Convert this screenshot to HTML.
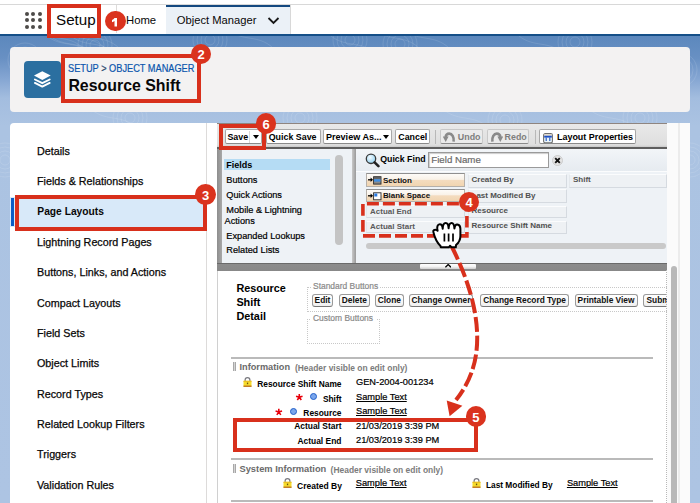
<!DOCTYPE html>
<html><head><meta charset="utf-8"><style>
html,body{margin:0;padding:0;width:700px;height:503px;overflow:hidden;background:#fff}
.a{position:absolute}
.t{position:absolute;white-space:nowrap;line-height:1;font-family:"Liberation Sans",sans-serif}
.badge{position:absolute;border-radius:50%;background:#da331e;color:#fff;font-family:"Liberation Sans",sans-serif;font-weight:700;font-size:13px;text-align:center}
</style></head><body>
<div class="a" style="left:0px;top:0px;width:700px;height:34px;background:#fff"></div>
<div class="a" style="left:0px;top:4px;width:700px;height:1px;background:#d8d8d8"></div>
<div class="a" style="left:24.60px;top:11.50px;width:4px;height:4px;border-radius:50%;background:#4d4b49"></div>
<div class="a" style="left:31.20px;top:11.50px;width:4px;height:4px;border-radius:50%;background:#4d4b49"></div>
<div class="a" style="left:37.70px;top:11.50px;width:4px;height:4px;border-radius:50%;background:#4d4b49"></div>
<div class="a" style="left:24.60px;top:18.10px;width:4px;height:4px;border-radius:50%;background:#4d4b49"></div>
<div class="a" style="left:31.20px;top:18.10px;width:4px;height:4px;border-radius:50%;background:#4d4b49"></div>
<div class="a" style="left:37.70px;top:18.10px;width:4px;height:4px;border-radius:50%;background:#4d4b49"></div>
<div class="a" style="left:24.60px;top:24.60px;width:4px;height:4px;border-radius:50%;background:#4d4b49"></div>
<div class="a" style="left:31.20px;top:24.60px;width:4px;height:4px;border-radius:50%;background:#4d4b49"></div>
<div class="a" style="left:37.70px;top:24.60px;width:4px;height:4px;border-radius:50%;background:#4d4b49"></div>
<div class="t" style="left:56.00px;top:12.03px;font-size:15.2px;font-weight:400;color:#080707;">Setup</div>
<div class="a" style="left:116px;top:5px;width:1px;height:28px;background:#dddbda"></div>
<div class="t" style="left:126.00px;top:14.63px;font-size:11.3px;font-weight:400;color:#080707;">Home</div>
<div class="a" style="left:166px;top:5px;width:123.5px;height:29px;background:#ebf1f7;border-top:2px solid #14487f;box-sizing:border-box"></div>
<div class="a" style="left:289.5px;top:5px;width:1.0px;height:29px;background:#d8d8d8"></div>
<div class="t" style="left:176.80px;top:15.02px;font-size:11.2px;font-weight:400;color:#080707;">Object Manager</div>
<svg class="a" style="left:267px;top:15.7px" width="13" height="9" viewBox="0 0 13 9"><path d="M1.5 2 L6.5 7 L11.5 2" fill="none" stroke="#181818" stroke-width="1.8"/></svg>
<div class="a" style="left:0px;top:34px;width:700px;height:2px;background:#154f88"></div>
<div class="a" style="left:0;top:36px;width:700px;height:467px;background:linear-gradient(180deg,#5c88bd 0px,#6890c3 22px,#84a5d2 42px,#a3bddf 62px,#abc3e2 90px,#adc4e3 467px)"></div>
<svg class="a" style="left:0;top:36px" width="700" height="467" viewBox="0 36 700 467"><g fill="none" stroke="#fff" stroke-opacity="0.13" stroke-width="0.9"><circle cx="25" cy="60" r="5" /><circle cx="25" cy="60" r="9" /><circle cx="25" cy="60" r="13" /><circle cx="25" cy="60" r="17" /><circle cx="95" cy="45" r="5" /><circle cx="95" cy="45" r="9" /><circle cx="95" cy="45" r="13" /><circle cx="95" cy="45" r="17" /><circle cx="210" cy="40" r="5" /><circle cx="210" cy="40" r="9" /><circle cx="210" cy="40" r="13" /><circle cx="210" cy="40" r="17" /><circle cx="300" cy="118" r="5" /><circle cx="300" cy="118" r="9" /><circle cx="300" cy="118" r="13" /><circle cx="300" cy="118" r="17" /><circle cx="400" cy="44" r="5" /><circle cx="400" cy="44" r="9" /><circle cx="400" cy="44" r="13" /><circle cx="400" cy="44" r="17" /><circle cx="505" cy="120" r="5" /><circle cx="505" cy="120" r="9" /><circle cx="505" cy="120" r="13" /><circle cx="505" cy="120" r="17" /><circle cx="575" cy="42" r="5" /><circle cx="575" cy="42" r="9" /><circle cx="575" cy="42" r="13" /><circle cx="575" cy="42" r="17" /><circle cx="680" cy="70" r="5" /><circle cx="680" cy="70" r="9" /><circle cx="680" cy="70" r="13" /><circle cx="680" cy="70" r="17" /><circle cx="690" cy="160" r="5" /><circle cx="690" cy="160" r="9" /><circle cx="690" cy="160" r="13" /><circle cx="690" cy="160" r="17" /><circle cx="5" cy="160" r="5" /><circle cx="5" cy="160" r="9" /><circle cx="5" cy="160" r="13" /><circle cx="5" cy="160" r="17" /><circle cx="130" cy="118" r="5" /><circle cx="130" cy="118" r="9" /><circle cx="130" cy="118" r="13" /><circle cx="130" cy="118" r="17" /><circle cx="640" cy="118" r="5" /><circle cx="640" cy="118" r="9" /><circle cx="640" cy="118" r="13" /><circle cx="640" cy="118" r="17" /><circle cx="350" cy="40" r="5" /><circle cx="350" cy="40" r="9" /><circle cx="350" cy="40" r="13" /><circle cx="350" cy="40" r="17" /><path d="M331 36 C346 48 361 40 376 54" /><path d="M404 30 C419 42 434 34 449 48" /><path d="M74 30 C89 42 104 34 119 48" /><path d="M374 30 C389 42 404 34 419 48" /><path d="M519 36 C534 48 549 40 564 54" /><path d="M38 30 C53 42 68 34 83 48" /><path d="M444 110 C459 122 474 114 489 128" /><path d="M71 36 C86 48 101 40 116 54" /><path d="M92 110 C107 122 122 114 137 128" /><path d="M60 30 C75 42 90 34 105 48" /><path d="M228 30 C243 42 258 34 273 48" /><path d="M590 110 C605 122 620 114 635 128" /><path d="M50 36 C65 48 80 40 95 54" /><path d="M47 36 C62 48 77 40 92 54" /></g></svg>
<div class="a" style="left:10px;top:47px;width:680px;height:65px;background:#f3f2f2;border-radius:4px"></div>
<div class="a" style="left:24px;top:61px;width:37px;height:37px;background:#2b6fa0;border-radius:4px"></div>
<svg class="a" style="left:0;top:0" width="70" height="100" viewBox="0 0 70 100"><path d="M34 75.6 L42.3 71.3 L50.7 75.6 L42.3 80 Z" fill="#fff"/><path d="M34.9 79.5 L42.3 83.2 L49.7 79.5" fill="none" stroke="#fff" stroke-width="1.9" stroke-linejoin="round" stroke-linecap="round"/><path d="M34.9 82.9 L42.3 86.6 L49.7 82.9" fill="none" stroke="#fff" stroke-width="1.9" stroke-linejoin="round" stroke-linecap="round"/></svg>
<div class="t" style="left:68.20px;top:63.22px;font-size:10.6px;font-weight:400;color:#0a55ad;transform:scaleX(0.87);transform-origin:0 0;-webkit-text-stroke:0.2px #0a55ad">SETUP <span style="color:#3e3e3c">&gt;</span> OBJECT MANAGER</div>
<div class="t" style="left:68.40px;top:78.14px;font-size:15.9px;font-weight:700;color:#080707;">Resource Shift</div>
<div class="a" style="left:10px;top:123px;width:680px;height:380px;background:#fff;border-radius:4px 4px 0 0"></div>
<div class="a" style="left:206px;top:123px;width:1px;height:380px;background:#dddbda"></div>
<div class="a" style="left:10px;top:197px;width:197px;height:30px;background:#d8e9f9"></div>
<div class="a" style="left:11px;top:197.5px;width:3px;height:28.5px;background:#0b5cc5"></div>
<div class="t" style="left:37.00px;top:145.90px;font-size:10.75px;font-weight:400;color:#080707;-webkit-text-stroke:0.25px #080707">Details</div>
<div class="t" style="left:37.00px;top:176.23px;font-size:10.75px;font-weight:400;color:#080707;-webkit-text-stroke:0.25px #080707">Fields &amp; Relationships</div>
<div class="t" style="left:37.30px;top:206.98px;font-size:10.25px;font-weight:700;color:#080707;">Page Layouts</div>
<div class="t" style="left:37.00px;top:236.89px;font-size:10.75px;font-weight:400;color:#080707;-webkit-text-stroke:0.25px #080707">Lightning Record Pages</div>
<div class="t" style="left:37.00px;top:267.22px;font-size:10.75px;font-weight:400;color:#080707;-webkit-text-stroke:0.25px #080707">Buttons, Links, and Actions</div>
<div class="t" style="left:37.00px;top:297.55px;font-size:10.75px;font-weight:400;color:#080707;-webkit-text-stroke:0.25px #080707">Compact Layouts</div>
<div class="t" style="left:37.00px;top:327.88px;font-size:10.75px;font-weight:400;color:#080707;-webkit-text-stroke:0.25px #080707">Field Sets</div>
<div class="t" style="left:37.00px;top:358.21px;font-size:10.75px;font-weight:400;color:#080707;-webkit-text-stroke:0.25px #080707">Object Limits</div>
<div class="t" style="left:37.00px;top:388.54px;font-size:10.75px;font-weight:400;color:#080707;-webkit-text-stroke:0.25px #080707">Record Types</div>
<div class="t" style="left:37.00px;top:418.87px;font-size:10.75px;font-weight:400;color:#080707;-webkit-text-stroke:0.25px #080707">Related Lookup Filters</div>
<div class="t" style="left:37.00px;top:449.20px;font-size:10.75px;font-weight:400;color:#080707;-webkit-text-stroke:0.25px #080707">Triggers</div>
<div class="t" style="left:37.00px;top:479.53px;font-size:10.75px;font-weight:400;color:#080707;-webkit-text-stroke:0.25px #080707">Validation Rules</div>
<div class="a" style="left:217px;top:123px;width:5px;height:147px;background:linear-gradient(90deg,#8d8d8d,#a8a8a8)"></div>
<div class="a" style="left:217px;top:270px;width:1px;height:233px;background:#d0d0d0"></div>
<div class="a" style="left:217px;top:123px;width:450px;height:26px;background:linear-gradient(180deg,#8f8580 0,#8f8580 1px,#e9e9e9 1px,#dedede 22px,#c9c9c9 24px,#5e5e5e 24px,#5e5e5e 26px)"></div>
<div class="a" style="left:225px;top:129px;width:37px;height:15px;background:#fff;border:1px solid #a8a8a8;border-bottom-color:#8a8a8a;border-radius:2px;box-sizing:border-box"></div>
<div class="a" style="left:249px;top:131px;width:1px;height:12px;background:#d8d8d8"></div>
<div class="t" style="left:227.40px;top:133.06px;font-size:8.9px;font-weight:700;color:#000;">Save</div>
<svg class="a" style="left:253.2px;top:134.6px" width="6" height="4" viewBox="0 0 6 4"><path d="M0 0 L6 0 L3 4 Z" fill="#000"/></svg>
<div class="a" style="left:266px;top:129px;width:54.5px;height:15px;background:#fff;border:1px solid #a8a8a8;border-bottom-color:#8a8a8a;border-radius:2px;box-sizing:border-box"></div>
<div class="t" style="left:268.70px;top:133.06px;font-size:8.9px;font-weight:700;color:#000;">Quick Save</div>
<div class="a" style="left:322.6px;top:129px;width:69.09999999999997px;height:15px;background:#fff;border:1px solid #a8a8a8;border-bottom-color:#8a8a8a;border-radius:2px;box-sizing:border-box"></div>
<div class="t" style="left:326.00px;top:132.94px;font-size:9.05px;font-weight:700;color:#000;">Preview As...</div>
<svg class="a" style="left:383.2px;top:134.6px" width="6" height="4" viewBox="0 0 6 4"><path d="M0 0 L6 0 L3 4 Z" fill="#000"/></svg>
<div class="a" style="left:395px;top:129px;width:35px;height:15px;background:#fff;border:1px solid #a8a8a8;border-bottom-color:#8a8a8a;border-radius:2px;box-sizing:border-box"></div>
<div class="t" style="left:398.30px;top:133.11px;font-size:8.85px;font-weight:700;color:#000;">Cancel</div>
<div class="a" style="left:434.5px;top:130px;width:1.0px;height:14px;background:#b8b8b8"></div>
<div class="a" style="left:440px;top:129px;width:43px;height:15px;background:#ebebeb;border:1px solid #c8c8c8;border-bottom-color:#8a8a8a;border-radius:2px;box-sizing:border-box"></div>
<svg class="a" style="left:443px;top:132px" width="13" height="11" viewBox="0 0 13 11"><path d="M10.6 9.6 C11.2 5 9 1.6 6.3 1.6 C4.2 1.6 2.9 3 2.6 5" fill="none" stroke="#8a8a8a" stroke-width="2.6"/><path d="M-0.2 4.6 L5.6 4.6 L2.7 9.9 Z" fill="#8a8a8a"/></svg>
<div class="t" style="left:457.80px;top:132.76px;font-size:8.9px;font-weight:700;color:#7e7e7e;">Undo</div>
<div class="a" style="left:487px;top:129px;width:42px;height:15px;background:#ebebeb;border:1px solid #c8c8c8;border-bottom-color:#8a8a8a;border-radius:2px;box-sizing:border-box"></div>
<svg class="a" style="left:489.5px;top:132px" width="13" height="11" viewBox="0 0 13 11"><g transform="translate(13,0) scale(-1,1)"><path d="M10.6 9.6 C11.2 5 9 1.6 6.3 1.6 C4.2 1.6 2.9 3 2.6 5" fill="none" stroke="#8a8a8a" stroke-width="2.6"/><path d="M-0.2 4.6 L5.6 4.6 L2.7 9.9 Z" fill="#8a8a8a"/></g></svg>
<div class="t" style="left:504.60px;top:132.76px;font-size:8.9px;font-weight:700;color:#7e7e7e;">Redo</div>
<div class="a" style="left:534.5px;top:130px;width:1.0px;height:14px;background:#b8b8b8"></div>
<div class="a" style="left:539px;top:129px;width:97px;height:15px;background:#fff;border:1px solid #a8a8a8;border-bottom-color:#8a8a8a;border-radius:2px;box-sizing:border-box"></div>
<svg class="a" style="left:543px;top:132.5px" width="10" height="10.5" viewBox="0 0 10 10.5"><rect x="0.6" y="0.6" width="8.8" height="9.3" rx="1.6" fill="#eaf5fb" stroke="#6f6f6f" stroke-width="1.1"/><rect x="1.2" y="1.2" width="7.6" height="1.6" fill="#e9dcc8"/><rect x="1.2" y="2.7" width="7.6" height="1.9" fill="#1d4fc4"/><rect x="2.6" y="4.4" width="1.2" height="3.6" fill="#3162c0"/><rect x="6.2" y="4.4" width="1.2" height="3.6" fill="#3162c0"/></svg>
<div class="t" style="left:557.00px;top:133.02px;font-size:8.95px;font-weight:700;color:#000;">Layout Properties</div>
<div class="a" style="left:222px;top:149px;width:130px;height:114px;background:#eef2f6"></div>
<div class="a" style="left:224.4px;top:159.2px;width:106.1px;height:10.600000000000023px;background:#b5dcf4"></div>
<div class="t" style="left:226.20px;top:160.88px;font-size:9.0px;font-weight:700;color:#000;">Fields</div>
<div class="t" style="left:226.30px;top:175.81px;font-size:9.2px;font-weight:400;color:#000;;-webkit-text-stroke:0.2px #000">Buttons</div>
<div class="t" style="left:226.30px;top:190.71px;font-size:9.2px;font-weight:400;color:#000;;-webkit-text-stroke:0.2px #000">Quick Actions</div>
<div class="t" style="left:226.30px;top:205.61px;font-size:9.2px;font-weight:400;color:#000;;-webkit-text-stroke:0.2px #000">Mobile &amp; Lightning</div>
<div class="t" style="left:224.60px;top:216.81px;font-size:9.2px;font-weight:400;color:#000;;-webkit-text-stroke:0.2px #000">Actions</div>
<div class="t" style="left:226.30px;top:231.71px;font-size:9.2px;font-weight:400;color:#000;;-webkit-text-stroke:0.2px #000">Expanded Lookups</div>
<div class="t" style="left:226.30px;top:245.91px;font-size:9.2px;font-weight:400;color:#000;;-webkit-text-stroke:0.2px #000">Related Lists</div>
<div class="a" style="left:335px;top:154.5px;width:7.5px;height:90.0px;background:#c4c4c4;border-radius:4px"></div>
<div class="a" style="left:352px;top:149px;width:4px;height:114px;background:linear-gradient(90deg,#c8c8c8,#9a9a9a)"></div>
<div class="a" style="left:356px;top:149px;width:311px;height:114px;background:#eef2f6"></div>
<div class="a" style="left:356px;top:149px;width:311px;height:22px;background:linear-gradient(180deg,#f2f5f8,#e6ebf0)"></div>
<div class="a" style="left:356px;top:171px;width:311px;height:1px;background:#fbfcfd"></div>
<svg class="a" style="left:365px;top:152.5px" width="15" height="15" viewBox="0 0 15 15"><defs><radialGradient id="lg" cx="40%" cy="35%" r="70%"><stop offset="0" stop-color="#f4fbff"/><stop offset="1" stop-color="#8fd0f0"/></radialGradient></defs><circle cx="6" cy="5.8" r="4.7" fill="url(#lg)" stroke="#3a3a3a" stroke-width="1.3"/><path d="M9.6 9.4 L13.4 13.2" stroke="#222" stroke-width="2.6" stroke-linecap="round"/></svg>
<div class="t" style="left:380.20px;top:154.95px;font-size:8.8px;font-weight:700;color:#000;">Quick Find</div>
<div class="a" style="left:428px;top:151.7px;width:121px;height:16.0px;background:#fff;border:1px solid #9a9a9a;box-sizing:border-box;box-shadow:inset 1px 1px 1px #ccc"></div>
<div class="t" style="left:431.30px;top:154.99px;font-size:9.7px;font-weight:400;color:#6a6a6a;;-webkit-text-stroke:0.2px #6a6a6a">Field Name</div>
<svg class="a" style="left:551.5px;top:154.8px" width="11" height="11" viewBox="0 0 11 11"><circle cx="5.5" cy="5.5" r="5" fill="#e4e4e4" stroke="#c4c4c4" stroke-width="0.8"/><path d="M3.2 3.2 L7.8 7.8 M7.8 3.2 L3.2 7.8" stroke="#111" stroke-width="1.9"/></svg>
<div class="a" style="left:366px;top:173.3px;width:99.30000000000001px;height:14.199999999999989px;box-sizing:border-box;background:linear-gradient(180deg,#fdfbf8 0%,#f9f2e8 45%,#f4dcbf 52%,#f1d5b1 100%);border:1px solid #b5b0aa;border-top-color:#8f8f8f"></div>
<div class="a" style="left:366px;top:189.4px;width:99.30000000000001px;height:12.299999999999983px;box-sizing:border-box;background:linear-gradient(180deg,#fdfbf8 0%,#f9f2e8 45%,#f4dcbf 52%,#f1d5b1 100%);border:1px solid #b5b0aa;border-top-color:#8f8f8f"></div>
<div class="a" style="left:366px;top:205px;width:99.30000000000001px;height:13px;box-sizing:border-box;background:#eef1f4;border:1px solid #d5dae0;border-top-color:#fbfcfd;border-left-color:#e4e8ec"></div>
<div class="a" style="left:366px;top:220.6px;width:99.30000000000001px;height:12.400000000000006px;box-sizing:border-box;background:#eef1f4;border:1px solid #d5dae0;border-top-color:#fbfcfd;border-left-color:#e4e8ec"></div>
<svg class="a" style="left:367px;top:175px" width="15" height="10" viewBox="0 0 15 10"><path d="M1 4.8 H4.5" stroke="#000" stroke-width="1.3"/><path d="M3.6 2.6 L6 4.8 L3.6 7 Z" fill="#000"/><rect x="6.6" y="1.7" width="7.4" height="7.4" fill="#8a8a8a" stroke="#2a2a2a" stroke-width="0.9"/><rect x="7.05" y="4.2" width="6.5" height="2.4" fill="#3d8fe6"/><rect x="7.05" y="2.15" width="6.5" height="1.6" fill="#5a5a5a"/></svg>
<div class="t" style="left:382.90px;top:177.08px;font-size:8.05px;font-weight:700;color:#111;">Section</div>
<svg class="a" style="left:367px;top:191px" width="15" height="10" viewBox="0 0 15 10"><path d="M1 4.8 H4.5" stroke="#000" stroke-width="1.3"/><path d="M3.6 2.6 L6 4.8 L3.6 7 Z" fill="#000"/><rect x="6.6" y="1.8" width="7.4" height="7" fill="#fff" stroke="#2a2a2a" stroke-width="0.9"/><rect x="7.3" y="2.5" width="3" height="3" fill="#2b7be0"/></svg>
<div class="t" style="left:382.90px;top:192.37px;font-size:7.95px;font-weight:700;color:#111;">Blank Space</div>
<div class="t" style="left:370.10px;top:207.57px;font-size:7.95px;font-weight:700;color:#5a5a5a;">Actual End</div>
<div class="t" style="left:370.10px;top:222.83px;font-size:8.0px;font-weight:700;color:#5a5a5a;">Actual Start</div>
<div class="a" style="left:468px;top:174.2px;width:99px;height:13.600000000000023px;box-sizing:border-box;background:#eef1f4;border:1px solid #d5dae0;border-top-color:#fbfcfd;border-left-color:#e4e8ec"></div>
<div class="t" style="left:471.50px;top:176.33px;font-size:8.0px;font-weight:700;color:#505050;">Created By</div>
<div class="a" style="left:468px;top:189.2px;width:99px;height:13.800000000000011px;box-sizing:border-box;background:#eef1f4;border:1px solid #d5dae0;border-top-color:#fbfcfd;border-left-color:#e4e8ec"></div>
<div class="t" style="left:471.50px;top:191.63px;font-size:8.0px;font-weight:700;color:#505050;">Last Modified By</div>
<div class="a" style="left:468px;top:205.5px;width:99px;height:12.900000000000006px;box-sizing:border-box;background:#eef1f4;border:1px solid #d5dae0;border-top-color:#fbfcfd;border-left-color:#e4e8ec"></div>
<div class="t" style="left:471.50px;top:207.23px;font-size:8.0px;font-weight:700;color:#505050;">Resource</div>
<div class="a" style="left:468px;top:220.5px;width:99px;height:13.800000000000011px;box-sizing:border-box;background:#eef1f4;border:1px solid #d5dae0;border-top-color:#fbfcfd;border-left-color:#e4e8ec"></div>
<div class="t" style="left:471.50px;top:222.43px;font-size:8.0px;font-weight:700;color:#505050;">Resource Shift Name</div>
<div class="a" style="left:569px;top:174.2px;width:98px;height:13.600000000000023px;box-sizing:border-box;background:#eef1f4;border:1px solid #d5dae0;border-top-color:#fbfcfd;border-left-color:#e4e8ec"></div>
<div class="t" style="left:572.90px;top:176.38px;font-size:8.05px;font-weight:700;color:#555;">Shift</div>
<div class="a" style="left:366px;top:242.5px;width:300px;height:6.5px;background:#c9c9c9;border-radius:3.5px"></div>
<div class="a" style="left:217px;top:262.5px;width:450px;height:8.0px;background:linear-gradient(180deg,#6a6a6a 0,#6a6a6a 1px,#8c8c8c 1px,#888 100%)"></div>
<div class="a" style="left:420px;top:263.8px;width:56.39999999999998px;height:5.599999999999966px;background:linear-gradient(180deg,#fff 0%,#f4f4f4 50%,#cfcfcf 100%);border-radius:1px"></div>
<svg class="a" style="left:444.8px;top:264.4px" width="6.4" height="3.6" viewBox="0 0 6.4 3.6"><path d="M0.4 3.3 L3.2 0.6 L6 3.3" fill="none" stroke="#000" stroke-width="1.4"/></svg>
<div class="a" style="left:667px;top:123px;width:23px;height:380px;background:#fbfbfb"></div>
<div class="a" style="left:678px;top:123px;width:2px;height:380px;background:#ececec"></div>
<div class="a" style="left:666px;top:270px;width:1px;height:233px;border-left:1px dotted #b8b8b8;box-sizing:border-box"></div>
<div class="a" style="left:670.5px;top:265.5px;width:6.5px;height:237.5px;background:#b9b9b9;border-radius:3px 3px 0 0"></div>
<div class="t" style="left:236.40px;top:283.01px;font-size:10.85px;font-weight:700;color:#000;">Resource</div>
<div class="t" style="left:236.40px;top:296.91px;font-size:10.85px;font-weight:700;color:#000;">Shift</div>
<div class="t" style="left:236.40px;top:310.71px;font-size:10.85px;font-weight:700;color:#000;">Detail</div>
<div class="a" style="left:306.5px;top:286.8px;width:360.5px;height:25.5px;border:1px dotted #c8c8c8;border-right:none;box-sizing:border-box"></div>
<div class="a" style="left:311px;top:283px;width:69px;height:8px;background:#fff"></div>
<div class="t" style="left:313.00px;top:281.95px;font-size:8.45px;font-weight:400;color:#8a8a8a;;-webkit-text-stroke:0.2px #8a8a8a">Standard Buttons</div>
<div class="a" style="left:311.6px;top:293.5px;width:21.799999999999955px;height:13.6px;background:linear-gradient(180deg,#fff,#f0f0f0);border:1px solid #9a9a9a;border-bottom-color:#777;border-radius:3px;box-sizing:border-box"></div>
<div class="t" style="left:272.50px;top:296.33px;font-size:8.35px;font-weight:700;color:#111;width:100px;text-align:center">Edit</div>
<div class="a" style="left:338.6px;top:293.5px;width:31.399999999999977px;height:13.6px;background:linear-gradient(180deg,#fff,#f0f0f0);border:1px solid #9a9a9a;border-bottom-color:#777;border-radius:3px;box-sizing:border-box"></div>
<div class="t" style="left:304.30px;top:296.33px;font-size:8.35px;font-weight:700;color:#111;width:100px;text-align:center">Delete</div>
<div class="a" style="left:374.6px;top:293.5px;width:29.5px;height:13.6px;background:linear-gradient(180deg,#fff,#f0f0f0);border:1px solid #9a9a9a;border-bottom-color:#777;border-radius:3px;box-sizing:border-box"></div>
<div class="t" style="left:339.35px;top:296.33px;font-size:8.35px;font-weight:700;color:#111;width:100px;text-align:center">Clone</div>
<div class="a" style="left:409.3px;top:293.5px;width:63.5px;height:13.6px;background:linear-gradient(180deg,#fff,#f0f0f0);border:1px solid #9a9a9a;border-bottom-color:#777;border-radius:3px;box-sizing:border-box"></div>
<div class="t" style="left:391.05px;top:296.33px;font-size:8.35px;font-weight:700;color:#111;width:100px;text-align:center">Change Owner</div>
<div class="a" style="left:479.9px;top:293.5px;width:89.30000000000007px;height:13.6px;background:linear-gradient(180deg,#fff,#f0f0f0);border:1px solid #9a9a9a;border-bottom-color:#777;border-radius:3px;box-sizing:border-box"></div>
<div class="t" style="left:474.55px;top:296.33px;font-size:8.35px;font-weight:700;color:#111;width:100px;text-align:center">Change Record Type</div>
<div class="a" style="left:574.5px;top:293.5px;width:63.10000000000002px;height:13.6px;background:linear-gradient(180deg,#fff,#f0f0f0);border:1px solid #9a9a9a;border-bottom-color:#777;border-radius:3px;box-sizing:border-box"></div>
<div class="t" style="left:556.05px;top:296.33px;font-size:8.35px;font-weight:700;color:#111;width:100px;text-align:center">Printable View</div>
<div class="a" style="left:643px;top:290px;width:23.5px;height:20px;overflow:hidden"><div class="a" style="left:0.2px;top:3.5px;width:40px;height:13.6px;background:linear-gradient(180deg,#fff,#f0f0f0);border:1px solid #9a9a9a;border-bottom-color:#777;border-radius:3px;box-sizing:border-box"></div><div class="t" style="left:3.5px;top:6.4px;font-size:8.35px;font-weight:700;color:#111">Submit</div></div>
<div class="a" style="left:306.5px;top:318.8px;width:73.69999999999999px;height:25.69999999999999px;border:1px dotted #c8c8c8;box-sizing:border-box"></div>
<div class="a" style="left:311px;top:315px;width:65px;height:8px;background:#fff"></div>
<div class="t" style="left:313.00px;top:313.75px;font-size:8.45px;font-weight:400;color:#8a8a8a;;-webkit-text-stroke:0.2px #8a8a8a">Custom Buttons</div>
<div class="a" style="left:666px;top:270px;width:1px;height:233px;border-left:1px dotted #b8b8b8;box-sizing:border-box"></div>
<div class="a" style="left:231px;top:357px;width:422px;height:2px;background:#bababa"></div>
<div class="a" style="left:232.6px;top:362px;width:3px;height:9px;background:linear-gradient(90deg,#a8a8a8 0 1px,#d4d4d4 1px 2px,#a8a8a8 2px 3px)"></div>
<div class="t" style="left:239.50px;top:363.31px;font-size:9.2px;font-weight:700;color:#6a6a6a;">Information</div>
<div class="t" style="left:294.90px;top:363.65px;font-size:8.45px;font-weight:700;color:#7c7c7c;">(Header visible on edit only)</div>
<svg class="a" style="left:242.5px;top:377px" width="9" height="10" viewBox="0 0 9 10"><path d="M2.1 4.3 V3 A2.4 2.4 0 0 1 6.9 3 V4.3" fill="none" stroke="#7a7a80" stroke-width="1.2"/><rect x="0.5" y="3.8" width="8" height="6" fill="#f6dc2c"/><rect x="0.5" y="8.6" width="8" height="1.2" fill="#b5651d"/><rect x="0.5" y="3.8" width="8" height="1" fill="#e8b820"/><rect x="3.9" y="5.6" width="1.3" height="1.6" fill="#6a5010"/></svg>
<div class="t" style="right:358.50px;top:379.89px;font-size:8.4px;font-weight:700;color:#000;text-align:right;">Resource Shift Name</div>
<div class="t" style="left:356.00px;top:378.37px;font-size:9.25px;font-weight:400;color:#000;;-webkit-text-stroke:0.2px #000">GEN-2004-001234</div>
<svg class="a" style="left:0;top:0" width="700" height="503"><path d="M299.30 397.30 L299.30 393.90 M299.30 397.30 L302.53 396.25 M299.30 397.30 L301.30 400.05 M299.30 397.30 L297.30 400.05 M299.30 397.30 L296.07 396.25 " stroke="#e8000b" stroke-width="1.6" stroke-linecap="butt"/></svg>
<div class="a" style="left:310.0px;top:393.1px;width:7px;height:7px;border-radius:50%;box-sizing:border-box;border:1.3px solid #2360c8;background:#7aa6ec"></div>
<div class="t" style="right:358.50px;top:394.99px;font-size:8.4px;font-weight:700;color:#000;text-align:right;">Shift</div>
<div class="t" style="left:356.00px;top:393.07px;font-size:9.25px;font-weight:400;color:#000;text-decoration:underline;-webkit-text-stroke:0.2px #000">Sample Text</div>
<svg class="a" style="left:0;top:0" width="700" height="503"><path d="M278.80 412.10 L278.80 408.70 M278.80 412.10 L282.03 411.05 M278.80 412.10 L280.80 414.85 M278.80 412.10 L276.80 414.85 M278.80 412.10 L275.57 411.05 " stroke="#e8000b" stroke-width="1.6" stroke-linecap="butt"/></svg>
<div class="a" style="left:290.3px;top:407.8px;width:7px;height:7px;border-radius:50%;box-sizing:border-box;border:1.3px solid #2360c8;background:#7aa6ec"></div>
<div class="t" style="right:358.50px;top:409.49px;font-size:8.4px;font-weight:700;color:#000;text-align:right;">Resource</div>
<div class="t" style="left:356.00px;top:406.77px;font-size:9.25px;font-weight:400;color:#000;text-decoration:underline;-webkit-text-stroke:0.2px #000">Sample Text</div>
<div class="t" style="right:358.50px;top:422.25px;font-size:8.45px;font-weight:700;color:#000;text-align:right;">Actual Start</div>
<div class="t" style="left:356.00px;top:421.87px;font-size:9.25px;font-weight:400;color:#000;;-webkit-text-stroke:0.2px #000">21/03/2019 3:39 PM</div>
<div class="t" style="right:358.50px;top:436.85px;font-size:8.45px;font-weight:700;color:#000;text-align:right;">Actual End</div>
<div class="t" style="left:356.00px;top:436.27px;font-size:9.25px;font-weight:400;color:#000;;-webkit-text-stroke:0.2px #000">21/03/2019 3:39 PM</div>
<div class="a" style="left:231px;top:458px;width:422px;height:2px;background:#bababa"></div>
<div class="a" style="left:233.2px;top:464px;width:3px;height:9px;background:linear-gradient(90deg,#a8a8a8 0 1px,#d4d4d4 1px 2px,#a8a8a8 2px 3px)"></div>
<div class="t" style="left:239.50px;top:465.13px;font-size:9.3px;font-weight:700;color:#6a6a6a;">System Information</div>
<div class="t" style="left:330.60px;top:465.65px;font-size:8.45px;font-weight:700;color:#7c7c7c;">(Header visible on edit only)</div>
<svg class="a" style="left:283px;top:478.3px" width="9" height="10" viewBox="0 0 9 10"><path d="M2.1 4.3 V3 A2.4 2.4 0 0 1 6.9 3 V4.3" fill="none" stroke="#7a7a80" stroke-width="1.2"/><rect x="0.5" y="3.8" width="8" height="6" fill="#f6dc2c"/><rect x="0.5" y="8.6" width="8" height="1.2" fill="#b5651d"/><rect x="0.5" y="3.8" width="8" height="1" fill="#e8b820"/><rect x="3.9" y="5.6" width="1.3" height="1.6" fill="#6a5010"/></svg>
<div class="t" style="right:358.10px;top:481.50px;font-size:8.5px;font-weight:700;color:#000;text-align:right;">Created By</div>
<div class="t" style="left:355.80px;top:478.67px;font-size:9.25px;font-weight:400;color:#000;text-decoration:underline;-webkit-text-stroke:0.2px #000">Sample Text</div>
<svg class="a" style="left:471.8px;top:478.2px" width="9" height="10" viewBox="0 0 9 10"><path d="M2.1 4.3 V3 A2.4 2.4 0 0 1 6.9 3 V4.3" fill="none" stroke="#7a7a80" stroke-width="1.2"/><rect x="0.5" y="3.8" width="8" height="6" fill="#f6dc2c"/><rect x="0.5" y="8.6" width="8" height="1.2" fill="#b5651d"/><rect x="0.5" y="3.8" width="8" height="1" fill="#e8b820"/><rect x="3.9" y="5.6" width="1.3" height="1.6" fill="#6a5010"/></svg>
<div class="t" style="left:485.90px;top:481.33px;font-size:8.35px;font-weight:700;color:#000;">Last Modified By</div>
<div class="t" style="left:566.90px;top:478.97px;font-size:9.25px;font-weight:400;color:#000;text-decoration:underline;-webkit-text-stroke:0.2px #000">Sample Text</div>
<div class="a" style="left:231px;top:500px;width:422px;height:2px;background:#bababa"></div>
<div class="a" style="left:47px;top:4px;width:54px;height:34px;border:4px solid #d8301c;box-sizing:border-box"></div>
<div class="a badge" style="left:104.80px;top:10.50px;width:20.80px;height:20.80px;line-height:20.80px"><span style="position:relative;top:1.4px"></span></div>
<svg class="a" style="left:0;top:0" width="130" height="40"><path d="M114.5 17.9 H117 V26.4 H114.5 V21 C113.8 21.6 112.9 22 112 22.2 V20 C113 19.7 113.9 19 114.5 17.9 Z" fill="#fff"/></svg>
<div class="a" style="left:61px;top:54px;width:140px;height:49px;border:4px solid #d8301c;box-sizing:border-box"></div>
<div class="a badge" style="left:190.80px;top:43.90px;width:20.40px;height:20.40px;line-height:20.40px"><span style="position:relative;top:1.4px">2</span></div>
<div class="a" style="left:15px;top:195px;width:192px;height:36px;border:4px solid #d8301c;box-sizing:border-box"></div>
<div class="a badge" style="left:195.10px;top:184.40px;width:20.80px;height:20.80px;line-height:20.80px"><span style="position:relative;top:1.4px">3</span></div>
<div class="a" style="left:219px;top:124px;width:47px;height:26px;border:4px solid #d8301c;box-sizing:border-box"></div>
<div class="a badge" style="left:255.80px;top:113.40px;width:20.60px;height:20.60px;line-height:20.60px"><span style="position:relative;top:1.4px">6</span></div>
<div class="a" style="left:233px;top:418px;width:245px;height:34px;border:4px solid #d8301c;box-sizing:border-box"></div>
<div class="a badge" style="left:465.50px;top:406.30px;width:20.80px;height:20.80px;line-height:20.80px"><span style="position:relative;top:1.4px">5</span></div>
<svg class="a" style="left:0;top:0" width="700" height="503" viewBox="0 0 700 503"><path d="M366.9 203.7 H378.9 M382.9 203.7 H394.9 M398.9 203.7 H410.9 M414.9 203.7 H426.9 M430.9 203.7 H442.9 M446.9 203.7 H458.9 M462.9 203.7 H468.5 M362.9 204.1 V215.8 M362.9 220.1 V231.8 M363 235.9 H375 M379 235.9 H391 M395 235.9 H407 M411 235.9 H423 M427 235.9 H439 M443 235.9 H455 M458 235.9 H468.7 M466.9 202 V211.5 M466.9 215.9 V227.5 M466.9 232 V237.7" fill="none" stroke="#d8301c" stroke-width="3.6"/><path d="M451.5 246 C465 273 477 305 477.2 337 C477.5 365 468 385 456 400" fill="none" stroke="#d8301c" stroke-width="4" stroke-dasharray="15 3.8"/><path d="M446.7 400.4 L462.4 405.7 L449.6 416.3 Z" fill="#d8301c"/></svg>
<div class="a badge" style="left:458.80px;top:191.50px;width:20.60px;height:20.60px;line-height:20.60px"><span style="position:relative;top:1.4px">4</span></div>
<svg class="a" style="left:428px;top:218px" width="36" height="34" viewBox="0 0 36 34"><path d="M5.5 14.5 C4.5 12.5 6.5 11 9 12.2 L9.6 12.8 C8.6 9 9.5 6.3 11.8 6.3 C13.6 6.3 14.5 7.8 14.7 10.8 C14.8 6 16 4.9 17.7 4.9 C19.4 4.9 20.4 6.2 20.6 10.3 C21 5.6 22.2 4.9 23.6 4.9 C25.2 4.9 26.2 6.2 26.4 10.5 C26.9 7.2 28 6.4 29.3 6.6 C31.3 6.9 32.4 8.4 32.4 10.8 L32.4 18 C32.4 22 30.5 25 28 27 L27.8 29.3 L23.5 29.3 L22 27.8 L20.8 29.3 L12.8 29.3 L12.5 28 C9.5 25 7 21 5.5 14.5 Z" fill="#fff" stroke="#000" stroke-width="2" stroke-linejoin="round"/><path d="M16.4 15.6 V23.4 M20.6 15.6 V23.4 M25 15.6 V23.4" stroke="#000" stroke-width="1.7"/></svg>
</body></html>
